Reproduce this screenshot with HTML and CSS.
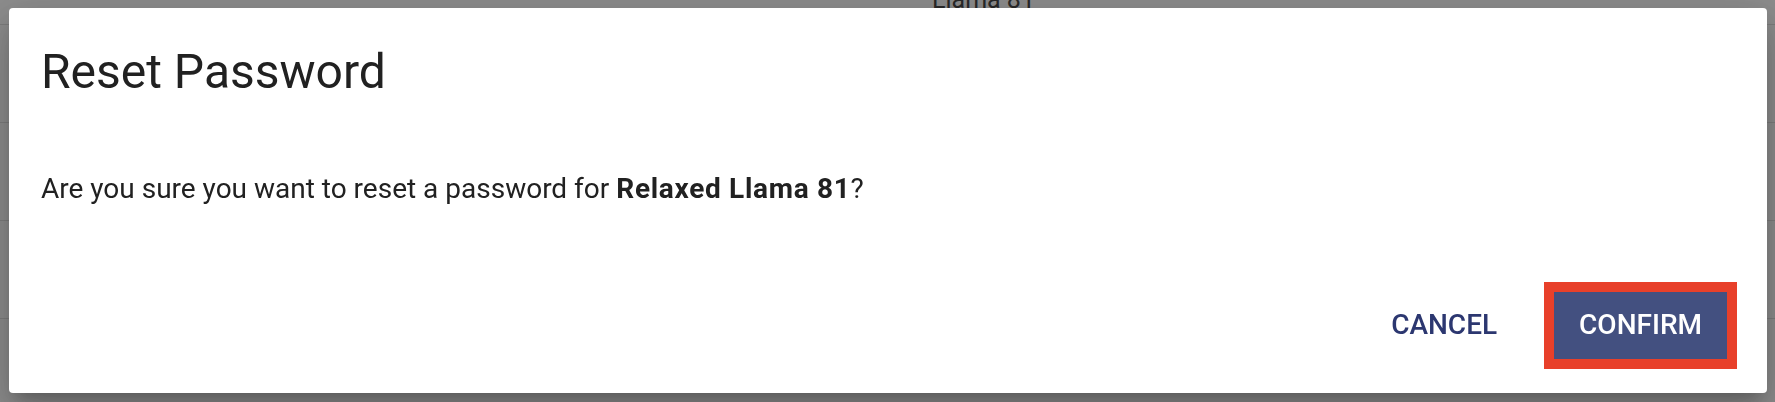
FILE: index.html
```html
<!DOCTYPE html>
<html lang="en">
<head>
<meta charset="utf-8">
<title>Reset Password</title>
<link rel="stylesheet" href="styles.css">
</head>
<body>
<div class="page">
  <div class="row row-first"><span class="cell-spacer"></span><span class="cell">Llama 81</span></div>
  <div class="row"></div>
  <div class="row"></div>
  <div class="row"></div>
  <div class="row"></div>
</div>
<div class="backdrop">
  <div class="dialog" role="dialog" aria-labelledby="dlg-title">
    <h2 class="dialog-title" id="dlg-title">Reset Password</h2>
    <p class="dialog-text">Are you sure you want to reset a password for <strong>Relaxed Llama 81</strong>?</p>
    <div class="dialog-actions">
      <button class="btn btn-text" type="button">Cancel</button>
      <button class="btn btn-contained btn-highlight" type="button">Confirm</button>
    </div>
  </div>
</div>
</body>
</html>
```

FILE: styles.css
```css
html, body {
  margin: 0;
  padding: 0;
  height: 100%;
  overflow: hidden;
}

body {
  font-family: Roboto, "Liberation Sans", Arial, sans-serif;
  background: #ffffff;
  color: #212121;
}

.page {
  display: flex;
  flex-direction: column;
}

.row {
  height: 97px;
  border-bottom: 1px solid #e2e2e2;
  display: grid;
  grid-template-columns: 932px 1fr;
  align-items: start;
}

.row-first {
  height: 24px;
}

.cell {
  font-size: 25px;
  line-height: 24px;
  color: #4a4a4a;
  margin-top: -12px;
}

.backdrop {
  position: fixed;
  inset: 0;
  background: rgba(0, 0, 0, 0.45);
  display: flex;
}

.dialog {
  flex: 1;
  margin: 8px 8px 9px 9px;
  background: #ffffff;
  border-radius: 4px;
  box-shadow: 0 11px 15px -7px rgba(0, 0, 0, 0.2),
              0 24px 38px 3px rgba(0, 0, 0, 0.14),
              0 9px 46px 8px rgba(0, 0, 0, 0.12);
  display: flex;
  flex-direction: column;
  padding: 36px 40px 34px 32px;
}

.dialog-title {
  margin: 0;
  font-size: 48px;
  line-height: 56px;
  font-weight: 400;
  color: #212121;
}

.dialog-text {
  margin: 69px 0 0 0;
  font-size: 28px;
  line-height: 40px;
  color: #212121;
}

.dialog-text strong {
  font-weight: 700;
  letter-spacing: 0.7px;
}

.dialog-actions {
  margin-top: 83px;
  display: flex;
  justify-content: flex-end;
  gap: 32px;
}

.btn {
  font-family: Roboto, "Liberation Sans", Arial, sans-serif;
  font-size: 28px;
  line-height: 40px;
  font-weight: 500;
  text-transform: uppercase;
  letter-spacing: 0;
  padding: 13px 25px 14px;
  border: 0;
  border-radius: 0;
  background: transparent;
  cursor: pointer;
}

.btn-text {
  color: #2c3770;
}

.btn-contained {
  background: #435080;
  color: #ffffff;
  box-shadow: 0 3px 1px -2px rgba(0, 0, 0, 0.2),
              0 2px 2px 0 rgba(0, 0, 0, 0.14),
              0 1px 5px 0 rgba(0, 0, 0, 0.12);
}

.btn-highlight {
  outline: 10px solid #e8402a;
  outline-offset: 0;
}
```
